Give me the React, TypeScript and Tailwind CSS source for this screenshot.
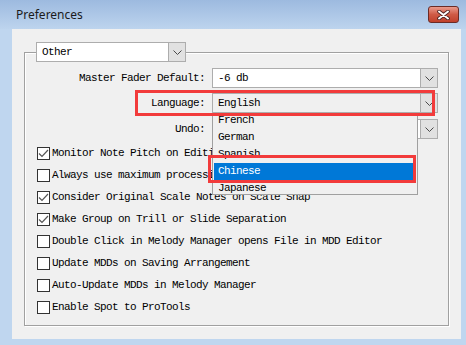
import React from "react";

const mono = "font-['Liberation_Mono',monospace] text-[11px] tracking-[-0.6px] text-black";

function Chevron() {
  return (
    <svg width="9" height="5" viewBox="0 0 9 5" className="block">
      <polyline points="0.5,0.5 4.5,4.5 8.5,0.5" fill="none" stroke="#4a4a4a" strokeWidth="1" />
    </svg>
  );
}

function Combo({
  value,
  field = "bg-white",
  className = "",
  children,
}: {
  value: string;
  field?: string;
  className?: string;
  children?: React.ReactNode;
}) {
  return (
    <div className={`relative flex h-[20px] border border-[#adadad] ${field} ${className}`}>
      <span className={`${mono} flex-1 pl-[5px] leading-[18px] whitespace-nowrap`}>{value}</span>
      <span className="flex w-[17px] items-center justify-center border-l border-[#adadad] bg-[#e1e1e1]">
        <Chevron />
      </span>
      {children}
    </div>
  );
}

function Checkbox({ checked }: { checked: boolean }) {
  return (
    <span className="flex h-[13px] w-[13px] shrink-0 items-center justify-center border border-[#333] bg-white">
      {checked && (
        <svg width="11" height="11" viewBox="0 0 11 11">
          <polyline points="1,5.5 4,8.5 10,2" fill="none" stroke="#555" strokeWidth="1.2" />
        </svg>
      )}
    </span>
  );
}

const options = [
  { label: "Monitor Note Pitch on Editing", checked: true },
  { label: "Always use maximum processing power", checked: false },
  { label: "Consider Original Scale Notes on Scale Snap", checked: true },
  { label: "Make Group on Trill or Slide Separation", checked: true },
  { label: "Double Click in Melody Manager opens File in MDD Editor", checked: false },
  { label: "Update MDDs on Saving Arrangement", checked: false },
  { label: "Auto-Update MDDs in Melody Manager", checked: false },
  { label: "Enable Spot to ProTools", checked: false },
];

const languages = ["French", "German", "Spanish", "Chinese", "Japanese"];

export default function App() {
  return (
    <div className="relative flex h-[345px] w-[466px] flex-col overflow-hidden bg-[#bfd6ef] pb-[6px] pl-[12px] pr-[5px]">
      {/* Title bar */}
      <div className="-ml-[12px] -mr-[5px] flex h-[29px] items-center bg-gradient-to-b from-[#9dbadf] to-[#bdd4ee] pl-[16px] pr-[7px]">
        <span className="flex-1 font-['Noto_Sans',sans-serif] text-[12px] text-[#1b1b1b]">Preferences</span>
        <button className="flex h-[17px] w-[31px] items-center justify-center rounded-[3px] border border-[#6b2b26] bg-gradient-to-b from-[#e99a8c] via-[#cf5a45] to-[#c0402b]">
          <svg width="13" height="10" viewBox="0 0 13 10">
            <path d="M2 1.5 L11 8.5 M11 1.5 L2 8.5" stroke="#4a2020" strokeWidth="3.6" strokeLinecap="round" />
            <path d="M2 1.5 L11 8.5 M11 1.5 L2 8.5" stroke="#ffffff" strokeWidth="2" strokeLinecap="round" />
          </svg>
        </button>
      </div>

      {/* Client area */}
      <div className="flex-1 bg-[#f0f0f0] pt-[13px]">
        <fieldset className="mx-[12px] border border-[#a0a0a0] pb-[7px] shadow-[1px_1px_0_white,inset_1px_1px_0_white]">
          <legend className="ml-[11px]">
            <Combo value="Other" className="w-[150px]" />
          </legend>

          <div className="grid grid-cols-[180px_226px] items-center gap-x-[7px] gap-y-[5px] pt-[6px]">
            <span className={`${mono} text-right`}>Master Fader Default:</span>
            <Combo value="-6 db" />

            <span className={`${mono} text-right`}>Language:</span>
            <Combo value="English" field="bg-[#f0f0f0]" className="z-10">
              <div className="absolute left-[-1px] top-[19px] h-[82px] w-[206px] overflow-hidden border border-t-0 border-[#a0a0a0] bg-[#f0f0f0] pl-[1px] pr-[3px]">
                <div className="-mt-[1px]">
                  {languages.map((l) => (
                    <div
                      key={l}
                      className={`${mono} h-[17px] pl-[4px] leading-[17px] ${
                        l === "Chinese" ? "bg-[#0078d7] text-white" : ""
                      }`}
                    >
                      {l}
                    </div>
                  ))}
                </div>
              </div>
            </Combo>

            <span className={`${mono} mt-[1px] text-right`}>Undo:</span>
            <Combo value="" className="mt-[1px]" />
          </div>

          <div className="mt-[3px] flex flex-col pl-[12px]">
            {options.map((o) => (
              <label key={o.label} className="flex h-[22px] items-center gap-[2px] whitespace-nowrap">
                <Checkbox checked={o.checked} />
                <span className={mono}>{o.label}</span>
              </label>
            ))}
          </div>
        </fieldset>
      </div>

      {/* Annotation highlights */}
      <div className="pointer-events-none absolute left-[135px] top-[90px] z-20 h-[26px] w-[300px] border-[3px] border-[#f23b3b]" />
      <div className="pointer-events-none absolute left-[208px] top-[155px] z-20 h-[28px] w-[208px] border-[3px] border-[#f23b3b]" />
    </div>
  );
}
